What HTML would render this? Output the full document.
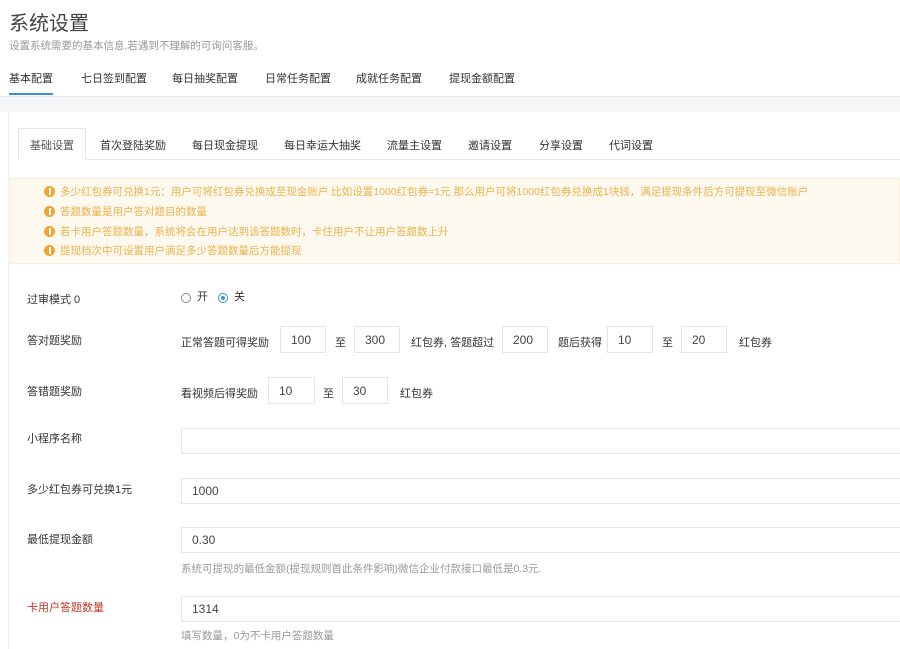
<!DOCTYPE html>
<html><head><meta charset="utf-8"><style>
*{margin:0;padding:0;box-sizing:border-box}
body{width:900px;height:649px;overflow:hidden;background:#fff;font-family:"Liberation Sans","Noto Sans CJK SC",sans-serif;color:#333;position:relative}
.a{position:absolute;white-space:nowrap}
.f{font-size:11px}
.in{position:absolute;border:1px solid #e5e6e7;background:#fff;font-size:12px;color:#444;padding-left:10px;display:flex;align-items:center}
.al{color:#ebb24e;font-size:10.5px;display:flex;align-items:center}
.ic{width:11px;height:11px;border-radius:50%;background:#f0a532;margin-right:5px;display:inline-block;position:relative}
.ic:after{content:"";position:absolute;left:5px;top:2px;width:1.5px;height:7px;background:#fff}
</style></head><body>
<div class="a" style="left:9px;top:7px;font-size:20px;color:#444">系统设置</div>
<div class="a" style="left:9px;top:38px;font-size:10.5px;color:#999">设置系统需要的基本信息,若遇到不理解的可询问客服。</div>
<div class="a f" style="left:9px;top:70px;color:#333">基本配置</div>
<div class="a f" style="left:81px;top:70px">七日签到配置</div>
<div class="a f" style="left:172px;top:70px">每日抽奖配置</div>
<div class="a f" style="left:265px;top:70px">日常任务配置</div>
<div class="a f" style="left:356px;top:70px">成就任务配置</div>
<div class="a f" style="left:449px;top:70px">提现金额配置</div>
<div class="a" style="left:9px;top:93px;width:44px;height:2px;background:#3b8fd9"></div>
<div class="a" style="left:0;top:96px;width:900px;height:1px;background:#ececec"></div>
<div class="a" style="left:0;top:97px;width:900px;height:15px;background:#f5f6f7"></div>
<div class="a" style="left:8px;top:112px;width:1px;height:537px;background:#eee"></div>
<div class="a" style="left:18px;top:159px;width:882px;height:1px;background:#e5e5e5"></div>
<div class="a" style="left:18px;top:128px;width:68px;height:32px;border:1px solid #e5e5e5;border-bottom:1px solid #fff;background:#fff"></div>
<div class="a f" style="left:30px;top:137px;color:#555">基础设置</div>
<div class="a f" style="left:100px;top:137px">首次登陆奖励</div>
<div class="a f" style="left:192px;top:137px">每日现金提现</div>
<div class="a f" style="left:284px;top:137px">每日幸运大抽奖</div>
<div class="a f" style="left:387px;top:137px">流量主设置</div>
<div class="a f" style="left:468px;top:137px">邀请设置</div>
<div class="a f" style="left:539px;top:137px">分享设置</div>
<div class="a f" style="left:609px;top:137px">代词设置</div>
<div class="a" style="left:10px;top:178px;width:890px;height:86px;background:#fdf9ef;border:1px solid #f8eedb"></div>
<div class="a al" style="left:44px;top:184px"><span class="ic"></span>多少红包券可兑换1元：用户可将红包券兑换成至现金账户 比如设置1000红包券=1元 那么用户可将1000红包券兑换成1块钱，满足提现条件后方可提现至微信账户</div>
<div class="a al" style="left:44px;top:204px"><span class="ic"></span>答题数量是用户答对题目的数量</div>
<div class="a al" style="left:44px;top:224px"><span class="ic"></span>若卡用户答题数量，系统将会在用户达到该答题数时，卡住用户不让用户答题数上升</div>
<div class="a al" style="left:44px;top:243px"><span class="ic"></span>提现档次中可设置用户满足多少答题数量后方能提现</div>

<div class="a f" style="left:27px;top:291px">过审模式 0</div>
<div class="a" style="left:181px;top:293px;width:10px;height:10px;border:1px solid #888;border-radius:50%"></div>
<div class="a f" style="left:197px;top:288px">开</div>
<div class="a" style="left:218px;top:293px;width:10px;height:10px;border:1px solid #3b8fd9;border-radius:50%;background:#fff"><div style="margin:2px;width:4px;height:4px;border-radius:50%;background:#3b8fd9"></div></div>
<div class="a f" style="left:234px;top:288px">关</div>

<div class="a f" style="left:27px;top:332px">答对题奖励</div>
<div class="a f" style="left:181px;top:334px">正常答题可得奖励</div>
<div class="in" style="left:280px;top:326px;width:46px;height:27px">100</div>
<div class="a f" style="left:335px;top:334px">至</div>
<div class="in" style="left:354px;top:326px;width:46px;height:27px">300</div>
<div class="a f" style="left:411px;top:334px">红包券, 答题超过</div>
<div class="in" style="left:502px;top:326px;width:46px;height:27px">200</div>
<div class="a f" style="left:558px;top:334px">题后获得</div>
<div class="in" style="left:607px;top:326px;width:46px;height:27px">10</div>
<div class="a f" style="left:662px;top:334px">至</div>
<div class="in" style="left:681px;top:326px;width:46px;height:27px">20</div>
<div class="a f" style="left:739px;top:334px">红包券</div>

<div class="a f" style="left:27px;top:383px">答错题奖励</div>
<div class="a f" style="left:181px;top:385px">看视频后得奖励</div>
<div class="in" style="left:268px;top:377px;width:47px;height:27px">10</div>
<div class="a f" style="left:323px;top:385px">至</div>
<div class="in" style="left:342px;top:377px;width:46px;height:27px">30</div>
<div class="a f" style="left:400px;top:385px">红包券</div>

<div class="a f" style="left:27px;top:430px">小程序名称</div>
<div class="in" style="left:181px;top:428px;width:725px;height:26px"></div>
<div class="a f" style="left:27px;top:481px">多少红包券可兑换1元</div>
<div class="in" style="left:181px;top:478px;width:725px;height:26px">1000</div>
<div class="a f" style="left:27px;top:531px">最低提现金额</div>
<div class="in" style="left:181px;top:527px;width:725px;height:26px">0.30</div>
<div class="a" style="left:181px;top:561px;font-size:10.5px;color:#999">系统可提现的最低金额(提现规则首此条件影响)微信企业付款接口最低是0.3元.</div>
<div class="a f" style="left:27px;top:599px;color:#c0392b">卡用户答题数量</div>
<div class="in" style="left:181px;top:596px;width:725px;height:26px">1314</div>
<div class="a" style="left:181px;top:628px;font-size:10.5px;color:#999">填写数量，0为不卡用户答题数量</div>
</body></html>
